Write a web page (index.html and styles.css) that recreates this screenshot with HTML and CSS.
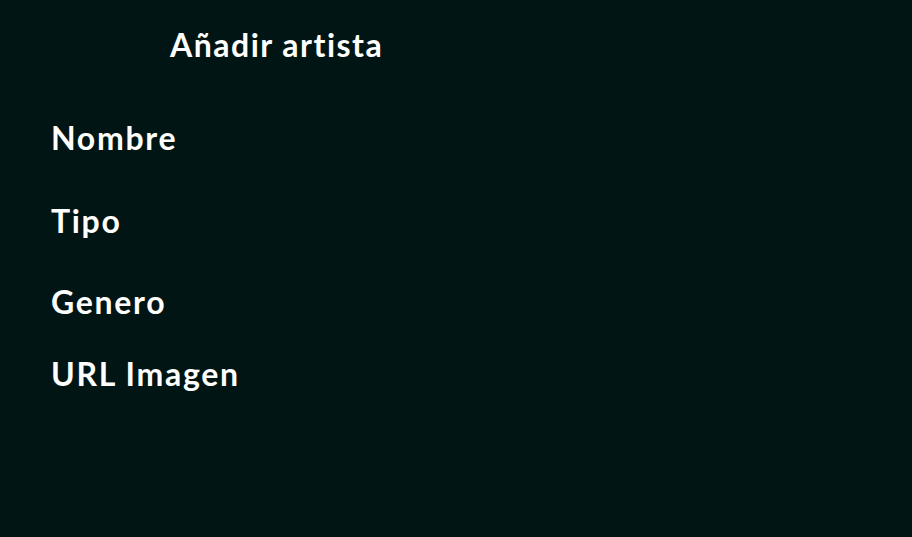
FILE: index.html
```html
<!DOCTYPE html>
<html lang="es">
<head>
<meta charset="utf-8">
<title>Añadir artista</title>
<link rel="stylesheet" href="styles.css">
</head>
<body>
<main class="page">
  <h1 class="title">Añadir artista</h1>
  <form class="form">
    <label class="label label-nombre">Nombre</label>
    <label class="label label-tipo">Tipo</label>
    <label class="label label-genero">Genero</label>
    <label class="label label-url">URL Imagen</label>
  </form>
</main>
</body>
</html>
```
FILE: styles.css
```css
html, body {
  margin: 0;
  padding: 0;
  background: #011614;
  height: 100%;
}
body {
  font-family: "Lato", "Open Sans", sans-serif;
  color: #ffffff;
}
.page {
  padding: 0 0 0 51px;
}
.title {
  margin: 0;
  padding: 25px 0 0 119px;
  font-size: 32px;
  font-weight: 700;
  line-height: 40px;
  letter-spacing: 1.5px;
}
.form {
  display: flex;
  flex-direction: column;
}
.label {
  font-size: 32px;
  font-weight: 700;
  line-height: 40px;
  letter-spacing: 1.7px;
}
.label-nombre { margin-top: 53px; }
.label-tipo { margin-top: 43px; }
.label-genero { margin-top: 41px; }
.label-url { margin-top: 32px; }
```
